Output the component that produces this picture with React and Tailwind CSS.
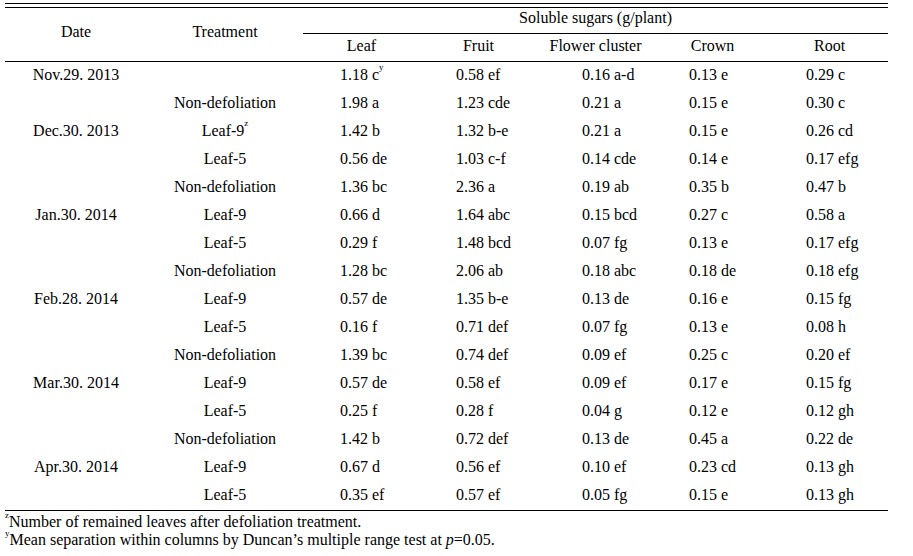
const rows = [
  ['Nov.29. 2013', '', '1.18 c', '0.58 ef', '0.16 a-d', '0.13 e', '0.29 c'],
  ['', 'Non-defoliation', '1.98 a', '1.23 cde', '0.21 a', '0.15 e', '0.30 c'],
  ['Dec.30. 2013', 'Leaf-9', '1.42 b', '1.32 b-e', '0.21 a', '0.15 e', '0.26 cd'],
  ['', 'Leaf-5', '0.56 de', '1.03 c-f', '0.14 cde', '0.14 e', '0.17 efg'],
  ['', 'Non-defoliation', '1.36 bc', '2.36 a', '0.19 ab', '0.35 b', '0.47 b'],
  ['Jan.30. 2014', 'Leaf-9', '0.66 d', '1.64 abc', '0.15 bcd', '0.27 c', '0.58 a'],
  ['', 'Leaf-5', '0.29 f', '1.48 bcd', '0.07 fg', '0.13 e', '0.17 efg'],
  ['', 'Non-defoliation', '1.28 bc', '2.06 ab', '0.18 abc', '0.18 de', '0.18 efg'],
  ['Feb.28. 2014', 'Leaf-9', '0.57 de', '1.35 b-e', '0.13 de', '0.16 e', '0.15 fg'],
  ['', 'Leaf-5', '0.16 f', '0.71 def', '0.07 fg', '0.13 e', '0.08 h'],
  ['', 'Non-defoliation', '1.39 bc', '0.74 def', '0.09 ef', '0.25 c', '0.20 ef'],
  ['Mar.30. 2014', 'Leaf-9', '0.57 de', '0.58 ef', '0.09 ef', '0.17 e', '0.15 fg'],
  ['', 'Leaf-5', '0.25 f', '0.28 f', '0.04 g', '0.12 e', '0.12 gh'],
  ['', 'Non-defoliation', '1.42 b', '0.72 def', '0.13 de', '0.45 a', '0.22 de'],
  ['Apr.30. 2014', 'Leaf-9', '0.67 d', '0.56 ef', '0.10 ef', '0.23 cd', '0.13 gh'],
  ['', 'Leaf-5', '0.35 ef', '0.57 ef', '0.05 fg', '0.15 e', '0.13 gh'],
]

const parts = ['Leaf', 'Fruit', 'Flower cluster', 'Crown', 'Root']
// left padding of the values in each data column
const pads = ['pl-[37px]', 'pl-[36px]', 'pl-[45px]', 'pl-[35px]', 'pl-[35px]']

const Sup = ({ children }) => <sup className="text-[9px] align-[5px] leading-none">{children}</sup>

export default function App() {
  return (
    <div className="w-[913px] h-[556px] bg-white text-black text-[16px] leading-tight font-['Liberation_Serif','Times_New_Roman',serif]">
      <div className="pt-[3px] pl-[5px]">
        <div className="w-[883px] border-t border-black pt-[3px]">
          <table className="w-full table-fixed border-collapse border-t border-black">
            <colgroup>
              <col className="w-[142px]" />
              <col className="w-[156px]" />
              {parts.map(p => <col key={p} className="w-[117px]" />)}
            </colgroup>
            <thead>
              <tr className="h-[23px]">
                <th rowSpan={2} className="p-0 font-normal text-center border-b border-black pb-[5px]">Date</th>
                <th rowSpan={2} className="p-0 font-normal text-center border-b border-black pb-[5px]">Treatment</th>
                <th colSpan={5} className="p-0 font-normal text-center border-b border-black pb-[5px]">Soluble sugars (g/plant)</th>
              </tr>
              <tr className="h-[28px]">
                {parts.map(p => <th key={p} className="p-0 font-normal text-center border-b border-black pb-[3px]">{p}</th>)}
              </tr>
            </thead>
            <tbody className="border-b border-black">
              {rows.map((r, i) => (
                <tr key={i} className="h-[28.07px]">
                  <td className="text-center pb-[2px]">{r[0]}</td>
                  <td className="text-center pb-[2px]">{r[1]}{i === 2 && <Sup>z</Sup>}</td>
                  {r.slice(2).map((v, j) => (
                    <td key={j} className={`text-left pb-[2px] ${pads[j]}`}>{v}{i === 0 && j === 0 && <Sup>y</Sup>}</td>
                  ))}
                </tr>
              ))}
            </tbody>
          </table>
        </div>
        <div className="mt-[2px] leading-[18px]">
          <p><Sup>z</Sup>Number of remained leaves after defoliation treatment.</p>
          <p><Sup>y</Sup>Mean separation within columns by Duncan’s multiple range test at <i>p</i>=0.05.</p>
        </div>
      </div>
    </div>
  )
}
